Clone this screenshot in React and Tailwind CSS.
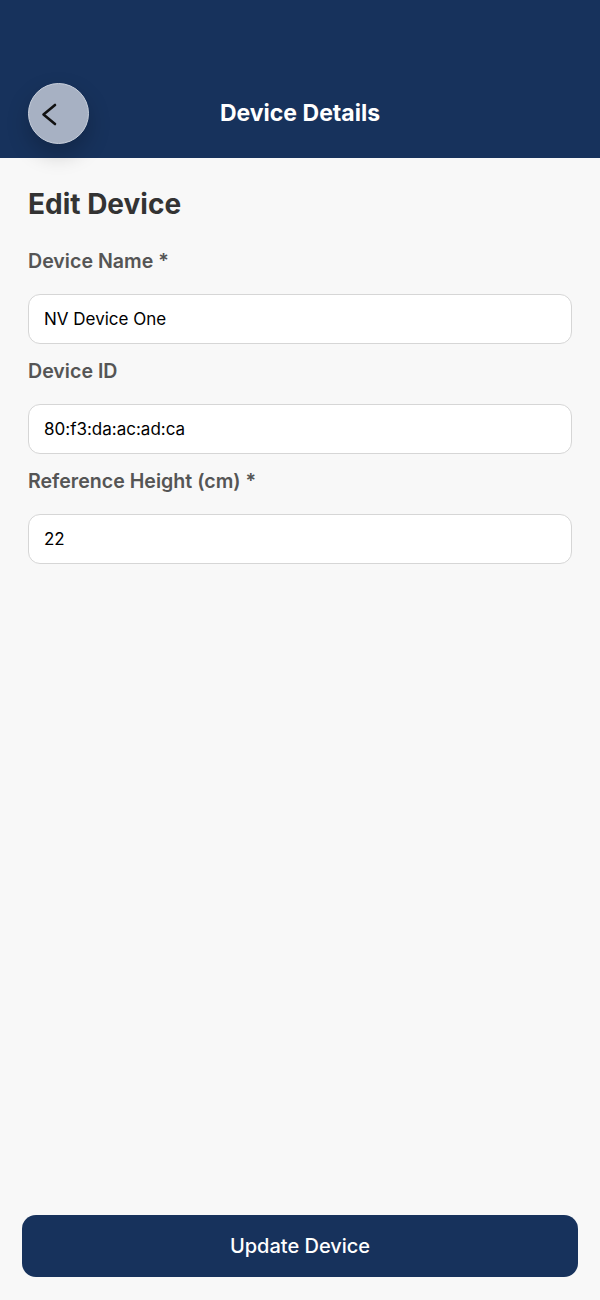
const fields = [
  { label: "Device Name *", value: "NV Device One" },
  { label: "Device ID", value: "80:f3:da:ac:ad:ca" },
  { label: "Reference Height (cm) *", value: "22" },
];

export default function App() {
  return (
    <div
      className="flex min-h-[1300px] flex-col bg-[#f8f8f8]"
      style={{ fontFamily: "Inter, 'Noto Sans', sans-serif" }}
    >
      {/* header */}
      <header className="relative flex h-[158px] items-end bg-[#17325c] px-7 pb-[14px]">
        <button className="h-[61px] w-[61px] rounded-full border border-[#c9d0dc] bg-[#a7b1c3] text-[#111] shadow-[0_10px_22px_rgba(0,0,0,0.22)]">
          <svg width="61" height="61" viewBox="0 0 61 61" fill="none" className="-m-px">
            <path
              d="M27 22 L15.5 31.5 L27 41"
              stroke="currentColor"
              strokeWidth="2.6"
              strokeLinecap="round"
              strokeLinejoin="round"
            />
          </svg>
        </button>
        <h1 className="absolute inset-x-0 bottom-[31px] text-center text-[23px] font-bold leading-[28px] text-white">
          Device Details
        </h1>
      </header>

      {/* form */}
      <main className="px-7 pt-7">
        <h2 className="text-[28px] font-bold leading-9 text-[#333]">Edit Device</h2>
        <div className="mt-[25px] flex flex-col gap-[13px]">
          {fields.map((f) => (
            <div key={f.label} className="flex flex-col gap-[19px]">
              <label className="text-[19.6px] font-semibold leading-7 text-[#555]">{f.label}</label>
              <input
                readOnly
                value={f.value}
                className="h-[50px] w-full rounded-xl border border-[#d6d6d6] bg-white px-[15px] text-[17px] text-black outline-none"
              />
            </div>
          ))}
        </div>
      </main>

      {/* footer action */}
      <div className="mt-auto px-[22px] pb-[23px]">
        <button className="h-[62px] w-full rounded-[14px] bg-[#17325c] text-[20px] font-medium text-white">
          Update Device
        </button>
      </div>
    </div>
  );
}
